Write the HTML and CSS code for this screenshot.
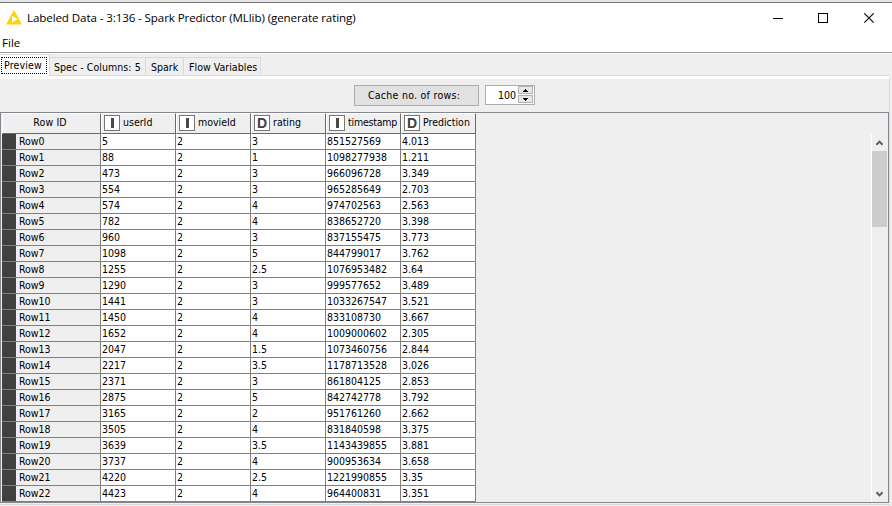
FILE: index.html
```html
<!DOCTYPE html>
<html lang="en">
<head>
<meta charset="utf-8">
<title>Labeled Data</title>
<link rel="stylesheet" href="styles.css">
</head>
<body>
<div class="window">
  <header class="titlebar">
    <svg class="logo" width="16" height="15" viewBox="0 0 16 15"><path d="M8 0L16 14.5H0Z" fill="#fdd20a"/><path d="M6 6L12 9.3L6 12.3Z" fill="#fff"/></svg>
    <h1 class="title"><span>Labeled Data - 3:136 - Spark Predictor (MLlib) (generate rating)</span></h1>
    <svg class="controls" width="103" height="12" viewBox="0 0 103 12" fill="none" stroke="#000"><path d="M0 6.5H10"/><rect x="45.5" y="1.5" width="9" height="9"/><path d="M91.3 1.3L100.7 10.7M100.7 1.3L91.3 10.7" stroke-width="1.1"/></svg>
  </header>
  <nav class="menubar">File</nav>
  <div class="tabs">
    <div class="tab active"><span class="t-preview">Preview</span></div>
    <div class="tab spec">Spec - Columns: 5</div>
    <div class="tab spark">Spark</div>
    <div class="tab flow">Flow Variables</div>
  </div>
  <main class="panel">
    <div class="toolbar">
      <button class="cache">Cache no. of rows:</button>
      <div class="spinner"><span>100</span>
        <div class="steps"><i><svg width="5" height="3" viewBox="0 0 5 3"><path d="M2 0h1v1h1v1h1v1H0V2h1V1h1z"/></svg></i><i><svg width="5" height="3" viewBox="0 0 5 3"><path d="M0 0h5v1H4v1H3v1H2V2H1V1H0z"/></svg></i></div>
      </div>
    </div>
    <section class="view">
      <div class="table" id="table">
        <div class="row head">
          <div class="rowid">Row ID</div>
          <div><b><i class="bar"></i></b><span>userId</span></div>
          <div><b><i class="bar"></i></b><span>movieId</span></div>
          <div><b>D</b><span>rating</span></div>
          <div><b><i class="bar"></i></b><span class="time">timestamp</span></div>
          <div><b>D</b><span>Prediction</span></div>
        </div>
      </div>
      <div class="scrollbar">
        <svg class="up" width="7" height="6" viewBox="0 0 7 6"><path d="M.4 4.7L3.5 1.6L6.6 4.7" fill="none" stroke="#5c5c5c" stroke-width="2"/></svg>
        <div class="thumb"></div>
        <svg class="down" width="7" height="6" viewBox="0 0 7 6"><path d="M.4 1.3L3.5 4.4L6.6 1.3" fill="none" stroke="#5c5c5c" stroke-width="2"/></svg>
      </div>
    </section>
  </main>
</div>
<script src="table.js"></script>
</body>
</html>
```
FILE: styles.css
```css
* { box-sizing: border-box; }
body { margin: 0; background: #efefef; color: #000; font: 10.5px/15px "DejaVu Sans Condensed", "DejaVu Sans", sans-serif; font-stretch: condensed; }
.window { width: 892px; height: 506px; display: flex; flex-direction: column; border-top: 2px solid #e5e5e5; overflow: hidden; white-space: nowrap; }
.titlebar { height: 32px; display: flex; align-items: center; background: #fff; border-top: 1px solid #777; padding: 0 16px 2px 6px; font-family: "Open Sans", sans-serif; font-stretch: normal; }
.title { margin: 0 0 0 5px; flex: 1; font-size: 11.6px; font-weight: 400; line-height: 18px; letter-spacing: -0.11px; }
.controls { margin-top: 0; }
.menubar { height: 19px; background: #fff; border-bottom: 1px solid #999; padding: 1px 0 0 2px; font: 11.6px/16px "Open Sans", sans-serif; }
.tabs { height: 23px; display: flex; align-items: flex-end; border-top: 1px solid #fff; background: #efefef; }
.tab { height: 19px; border: 1px solid #d9d9d9; border-left: 0; padding-top: 2px; }
.tab.active { width: 50px; height: 22px; background: #fff; border-bottom: 0; padding: 2px 0 0 1px; }
.t-preview { display: block; width: 46px; height: 17px; border: 1px dotted #000; padding-left: 2px; line-height: 14px; letter-spacing: 0.15px; }
.spec { width: 96px; padding-left: 4px; letter-spacing: 0.06px; }
.spark { width: 38px; padding-left: 5px; }
.flow { width: 77px; padding-left: 5px; letter-spacing: 0.04px; }
.tabs::after { content: ""; flex: 1; height: 1px; margin-right: 2px; background: #d9d9d9; }
.panel { width: 890px; height: 429px; border-right: 1px solid #d9d9d9; border-top: 3px solid #fff; border-bottom: 1px solid #d9d9d9; flex: none; }
.toolbar { height: 33px; display: flex; padding: 6px 0 0 354px; gap: 6px; }
.cache { width: 125px; height: 21px; border: 1px solid #adadad; background: #e1e1e1; color: #000; font: inherit; padding: 0 5px 0 0; letter-spacing: 0.27px; }
.spinner { width: 50px; height: 20px; border: 1px solid #abadb3; background: #fff; display: flex; justify-content: flex-end; line-height: 19px; }
.steps { width: 15px; height: 17px; margin: 0 1px 0 2px; display: flex; flex-direction: column; gap: 1px; }
.steps i { flex: 1; display: flex; align-items: center; justify-content: center; background: #e7e7e7; border: 1px solid #b2b2b2; }
.view { width: 889px; height: 391px; border: 1px solid #828790; display: flex; justify-content: space-between; }
.table { width: 475px; padding-left: 1px; }
.row { display: grid; grid-template-columns: 14px 85px repeat(5, 75px); height: 16px; line-height: 15px; }
.row > div { background: #fff; border-right: 1px solid #808080; border-bottom: 1px solid #808080; padding-left: 1px; overflow: hidden; }
.row > .mark { background: #404040; border-right: 0; }
.row > .name { background: #efefef; padding-left: 3px; }
.head { height: 21px; }
.head > div { display: flex; background: #efefef; border-color: #696969; padding: 1px 0 0 2px; line-height: 15px; border-left: 1px solid #fff; border-top: 1px solid #fff; }
.head > .rowid { grid-column: span 2; justify-content: center; padding: 0 3px 0 0; line-height: 17px; letter-spacing: 0.15px; }
.head b { width: 16px; height: 16px; margin-right: 3px; flex: none; border: 1px solid #777; background: #fff; display: flex; align-items: center; justify-content: center; color: #404040; font: bold 14px/14px "Liberation Sans", sans-serif; }
.time { letter-spacing: -0.2px; }
.bar { width: 3px; height: 10px; background: #484848; }
.scrollbar { width: 17px; margin-top: 21px; border-left: 1px solid #fff; display: flex; flex-direction: column; padding: 6px 1px 5px 0; }
.up, .down { margin-left: 4px; flex: none; }
.thumb { height: 76px; margin-top: 5px; background: #cdcdcd; }
.down { margin-top: auto; }
```
FILE: table.js
```js
const rows = [
  [5, 3, 851527569, 4.013], [88, 1, 1098277938, 1.211], [473, 3, 966096728, 3.349],
  [554, 3, 965285649, 2.703], [574, 4, 974702563, 2.563], [782, 4, 838652720, 3.398],
  [960, 3, 837155475, 3.773], [1098, 5, 844799017, 3.762], [1255, 2.5, 1076953482, 3.64],
  [1290, 3, 999577652, 3.489], [1441, 3, 1033267547, 3.521], [1450, 4, 833108730, 3.667],
  [1652, 4, 1009000602, 2.305], [2047, 1.5, 1073460756, 2.844], [2217, 3.5, 1178713528, 3.026],
  [2371, 3, 861804125, 2.853], [2875, 5, 842742778, 3.792], [3165, 2, 951761260, 2.662],
  [3505, 4, 831840598, 3.375], [3639, 3.5, 1143439855, 3.881], [3737, 4, 900953634, 3.658],
  [4220, 2.5, 1221990855, 3.35], [4423, 4, 964400831, 3.351]
];
document.getElementById("table").insertAdjacentHTML("beforeend", rows.map(([user, rating, time, prediction], i) =>
  `<div class="row"><div class="mark"></div><div class="name">Row${i}</div>` +
  [user, 2, rating, time, prediction].map(v => `<div>${v}</div>`).join("") + "</div>").join(""));
```
